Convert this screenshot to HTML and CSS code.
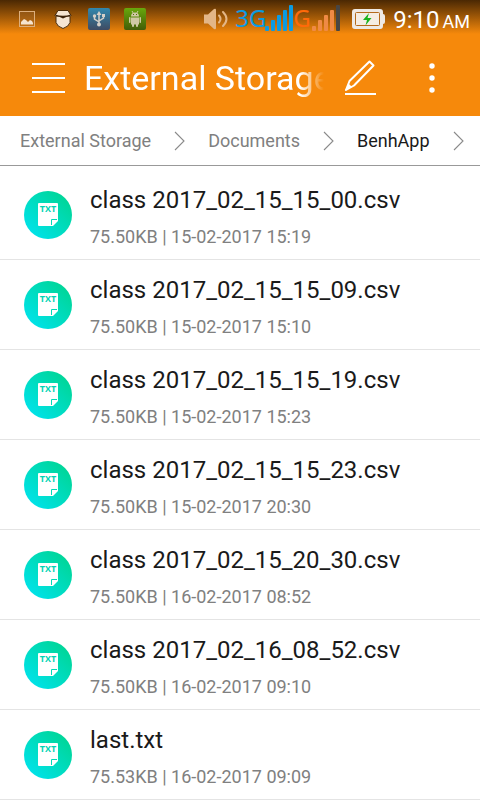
FILE: index.html
```html
<!DOCTYPE html>
<html lang="en">
<head>
<meta charset="utf-8">
<meta name="viewport" content="width=device-width, initial-scale=1">
<title>External Storage</title>
<link rel="stylesheet" href="styles.css">
</head>
<body>
<svg class="defs" aria-hidden="true">
  <defs>
    <linearGradient id="teal" x1="0.15" y1="0.85" x2="0.85" y2="0.15">
      <stop offset="0" stop-color="#00e2e6"/>
      <stop offset="1" stop-color="#00d69a"/>
    </linearGradient>
    <linearGradient id="usb-bg" x1="0" y1="0" x2="0" y2="1">
      <stop offset="0" stop-color="#3188ae"/>
      <stop offset="1" stop-color="#3f4b62"/>
    </linearGradient>
    <linearGradient id="droid-bg" x1="0" y1="0" x2="0" y2="1">
      <stop offset="0" stop-color="#68a80c"/>
      <stop offset="1" stop-color="#435c08"/>
    </linearGradient>
    <symbol id="txt-file" viewBox="0 0 48 48">
      <circle cx="24" cy="24" r="24" fill="url(#teal)"/>
      <path d="M15 12h18a1 1 0 0 1 1 1v17l-5 5H15a1 1 0 0 1-1-1V13a1 1 0 0 1 1-1z" fill="#fff"/>
      <path d="M27.500 34v-5.500h5.500" fill="none" stroke="#00dbb8" stroke-width="1"/>
      <text x="24" y="21" text-anchor="middle" class="txt-label">TXT</text>
    </symbol>
    <symbol id="chevron" viewBox="0 0 11 20">
      <path d="M1 1l9 9-9 9" fill="none" stroke="#8a8a8a" stroke-width="1.100"/>
    </symbol>
  </defs>
</svg>

<header class="top">
  <div class="status">
    <div class="notices">
      <svg width="16" height="16" viewBox="0 0 16 16"><rect x="0.500" y="0.500" width="15" height="15" fill="#a66a29" fill-opacity=".4" stroke="#dcae7c"/><path d="M2 13.500V11l2-2 1-1 2 1 2 2 2-2 2 1 1 2v1.500z" fill="#f5e3cd"/></svg>
      <svg width="18" height="20" viewBox="0 0 18 20"><path d="M4 1.500h10l3 5-1 1v6q-1 4-7 6-6-2-7-6v-6l-1-1z" fill="#f5e5d3" stroke="#4a2c0c" stroke-width="1"/><path d="M1 5.500q8 2.500 16 0l-1 2q-4 0-7 2-3-2-7-2z" fill="#3b220a"/></svg>
      <svg width="22" height="22" viewBox="0 0 22 22"><rect width="22" height="22" rx="2" fill="url(#usb-bg)"/><g fill="none" stroke="#d5d0c8" stroke-width="1.500"><path d="M11 17V5M11 14l-4.500-3V8M11 13l4.500-3V7"/></g><path d="M8.500 7L11 3l2.500 4z" fill="#d5d0c8"/><circle cx="6.500" cy="8" r="1.700" fill="#d5d0c8"/><rect x="14" y="6" width="3" height="3" fill="#d5d0c8"/><circle cx="11" cy="16.500" r="2" fill="#d5d0c8"/></svg>
      <svg width="22" height="22" viewBox="0 0 22 22"><rect width="22" height="22" rx="2" fill="url(#droid-bg)"/><g fill="#cfc9a4"><path d="M7 8.500q0-4 4-4t4 4zM7 9.500h8v7H7z"/><rect x="5" y="9" width="1.500" height="6" rx=".7"/><rect x="15.500" y="9" width="1.500" height="6" rx=".7"/><rect x="8" y="15" width="2" height="4" rx="1"/><rect x="12" y="15" width="2" height="4" rx="1"/></g><path d="M8 3l1.500 2.500M14 3l-1.500 2.500" stroke="#cfc9a4"/><path d="M9 6.500h1M12 6.500h1" stroke="#52700a"/></svg>
    </div>
    <div class="system">
      <svg class="speaker" width="24" height="22" viewBox="0 0 24 22"><path d="M0 6.500h4L10 1q2-1 2 1v18q0 2-2 1l-6-5.500H0z" fill="#e3b687"/><g fill="none" stroke="#e3b687" stroke-width="2" stroke-linecap="round"><path d="M15 7.500q3 3.500 0 7"/><path d="M19 4q7 7 0 14"/></g></svg>
      <span class="net net-a">3G</span>
      <svg class="bars" width="28" height="26" viewBox="0 0 28 26" fill="#0c9be2"><rect y="21" width="4" height="5" rx="1"/><rect x="6" y="15" width="4" height="11" rx="1"/><rect x="12" y="10" width="4" height="16" rx="1"/><rect x="18" y="5" width="4" height="21" rx="1"/><rect x="24" width="4" height="26" rx="1"/></svg>
      <span class="net net-b">G</span>
      <svg class="bars" width="28" height="26" viewBox="0 0 28 26" fill="#ef8a45"><rect y="21" width="4" height="5" rx="1"/><rect x="6" y="15" width="4" height="11" rx="1"/><rect x="12" y="10" width="4" height="16" rx="1"/><rect x="18" y="5" width="4" height="21" rx="1"/><rect x="24" width="4" height="26" rx="1" fill="#484644"/></svg>
      <svg class="battery" width="33" height="20" viewBox="0 0 33 20"><path d="M3 0h25q3 0 3 3v2q2 0 2 2v6q0 2-2 2v2q0 3-3 3H3q-3 0-3-3V3q0-3 3-3z" fill="#eee9e4"/><rect x="3.500" y="3.500" width="24" height="13" rx="1" fill="#f5ede3" stroke="#b56a1c"/><path d="M17 4L11 11h4l-1.500 5.500 6-7.500h-4z" fill="#19b31b"/></svg>
      <time class="clock"><span>9:10</span><small>AM</small></time>
    </div>
  </div>
  <div class="bar">
    <button class="icon-btn menu" aria-label="Menu"><svg width="33" height="30" viewBox="0 0 33 30"><path d="M0 1h33M0 15h33M0 29h33" stroke="#fff" stroke-width="2"/></svg></button>
    <h1>External Storage</h1>
    <button class="icon-btn edit" aria-label="Edit"><svg width="32" height="36" viewBox="0 0 32 36" fill="none" stroke="#fff"><path d="M1 34h31" stroke-width="2"/><path d="M2 30L5.500 21 25.500 1.500l4 4L10 25.500z" stroke-width="2" stroke-linejoin="round"/><path d="M1 30.500l3.500-7 3.500 3.500z" fill="#fff" stroke="none"/></svg></button>
    <button class="icon-btn more" aria-label="More options"><svg width="6" height="30" viewBox="0 0 6 30" fill="#fff"><circle cx="3" cy="3" r="2.700"/><circle cx="3" cy="15" r="2.700"/><circle cx="3" cy="27" r="2.700"/></svg></button>
  </div>
</header>

<nav class="crumbs" aria-label="Path">
  <a href="#">External Storage</a>
  <svg width="11" height="20"><use href="#chevron"/></svg>
  <a href="#">Documents</a>
  <svg width="11" height="20"><use href="#chevron"/></svg>
  <a href="#" class="current" aria-current="page">BenhApp</a>
  <svg width="11" height="20"><use href="#chevron"/></svg>
</nav>

<main>
  <ul class="files">
    <li><svg width="48" height="48"><use href="#txt-file"/></svg><div><h2>class 2017_02_15_15_00.csv</h2><p>75.50KB | 15-02-2017 15:19</p></div></li>
    <li><svg width="48" height="48"><use href="#txt-file"/></svg><div><h2>class 2017_02_15_15_09.csv</h2><p>75.50KB | 15-02-2017 15:10</p></div></li>
    <li><svg width="48" height="48"><use href="#txt-file"/></svg><div><h2>class 2017_02_15_15_19.csv</h2><p>75.50KB | 15-02-2017 15:23</p></div></li>
    <li><svg width="48" height="48"><use href="#txt-file"/></svg><div><h2>class 2017_02_15_15_23.csv</h2><p>75.50KB | 15-02-2017 20:30</p></div></li>
    <li><svg width="48" height="48"><use href="#txt-file"/></svg><div><h2>class 2017_02_15_20_30.csv</h2><p>75.50KB | 16-02-2017 08:52</p></div></li>
    <li><svg width="48" height="48"><use href="#txt-file"/></svg><div><h2>class 2017_02_16_08_52.csv</h2><p>75.50KB | 16-02-2017 09:10</p></div></li>
    <li><svg width="48" height="48"><use href="#txt-file"/></svg><div><h2>last.txt</h2><p>75.53KB | 16-02-2017 09:09</p></div></li>
  </ul>
</main>
</body>
</html>
```

FILE: styles.css
```css
* { box-sizing: border-box; }
body {
  margin: 0;
  background: #fff;
  color: #1a1a1a;
  font-family: Roboto, "Noto Sans", sans-serif;
}
h1, h2, p, ul { margin: 0; padding: 0; font-weight: 400; }
svg { display: block; flex: none; }
.defs { position: absolute; width: 0; height: 0; }

.top {
  background: linear-gradient(#4a2803 0, #f6890b 34px);
  background-color: #f6890b;
  color: #fff;
}
.status {
  display: flex;
  justify-content: space-between;
  align-items: center;
  height: 38px;
  padding: 0 10px 0 19px;
}
.notices { display: flex; align-items: center; }
.notices svg + svg { margin-left: 14px; }
.notices svg:nth-child(2) { margin-left: 19px; }
.notices svg:nth-child(3) { margin-left: 16px; }
.system { display: flex; align-items: center; }
.speaker { margin-right: 7px; }
.net {
  font-family: "Noto Sans", "Open Sans", sans-serif;
  font-size: 24px;
  line-height: 36px;
  margin-bottom: 3px;
}
.net-a { color: #0c9be2; width: 30px; }
.net-b { color: #ff6a0a; width: 19px; }
.bars { margin-bottom: 2px; }
.battery { margin: 0 8px 0 12px; }
.clock {
  display: flex;
  align-items: baseline;
  gap: 3px;
  padding-top: 4px;
  font-size: 24px;
  line-height: 36px;
}
.clock small { font-size: 18px; }

.bar {
  display: flex;
  align-items: center;
  height: 78px;
  padding: 2px 45px 0 32px;
}
.icon-btn {
  flex: none;
  padding: 0;
  border: 0;
  background: none;
  cursor: pointer;
}
.bar h1 {
  flex: 1;
  min-width: 0;
  margin: 0 20px 0 19px;
  font-size: 34px;
  line-height: 44px;
  white-space: nowrap;
  overflow: hidden;
  -webkit-mask-image: linear-gradient(to left, transparent, #000 24px);
  mask-image: linear-gradient(to left, transparent, #000 24px);
}
.edit { margin-right: 53px; }

.crumbs {
  display: flex;
  align-items: center;
  gap: 23px;
  height: 50px;
  padding: 0 20px;
  border-bottom: 1px solid #999;
  font-size: 18px;
  white-space: nowrap;
  overflow: hidden;
}
.crumbs a { color: #808080; text-decoration: none; }
.crumbs .current { color: #1a1a1a; }

.files { list-style: none; padding-top: 4px; }
.files li {
  display: flex;
  align-items: center;
  gap: 18px;
  height: 90px;
  padding: 0 24px;
  border-bottom: 1px solid #e4e4e4;
}
.files li div { padding-top: 8px; }
.files h2 { font-size: 24px; line-height: 34px; margin-bottom: 2px; }
.files p { font-size: 18px; line-height: 36px; color: #808080; }
.txt-label { font: 700 9px "Open Sans", sans-serif; fill: #00d4b4; }
```
